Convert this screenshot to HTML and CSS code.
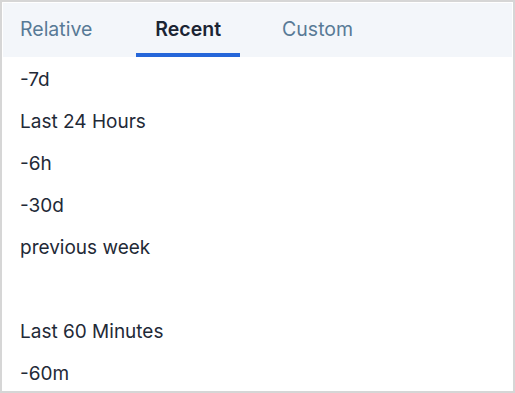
FILE: index.html
```html
<!DOCTYPE html>
<html lang="en">

<head>
    <meta charset="UTF-8">
    <title>Time range</title>
    <link rel="stylesheet" href="styles.css">
</head>

<body>

    <div class="panel">
        <div class="tabs">
            <div class="tab">Relative</div>
            <div class="tab active">Recent</div>
            <div class="tab">Custom</div>
        </div>

        <ul class="recent-list">
            <li>-7d</li>
            <li>Last 24 Hours</li>
            <li>-6h</li>
            <li>-30d</li>
            <li>previous week</li>
            <li></li>
            <li>Last 60 Minutes</li>
            <li>-60m</li>
        </ul>
    </div>

</body>

</html>
```

FILE: styles.css
```css
html,
body {
    margin: 0;
    height: 100%;
}

body {
    background: #d6d6d6;
    font-family: Inter, "Liberation Sans", sans-serif;
    padding: 2px;
    box-sizing: border-box;
}

.panel {
    height: 100%;
    background: white;
    border: 1px solid #ffffff;
    box-sizing: border-box;
    overflow: hidden;
}

.tabs {
    display: flex;
    gap: 25px;
    height: 54px;
    background: #f3f6fa;
}

.tab {
    padding: 0 17px;
    font-size: 19.5px;
    line-height: 52px;
    height: 50px;
    color: #587a96;
    border-bottom: 4px solid transparent;
}

.tab:first-child {
    padding-right: 19px;
}

.tab.active {
    padding: 0 19px;
    color: #1b2433;
    font-weight: 600;
    border-bottom-color: #2566d9;
}

.recent-list {
    list-style: none;
    margin: 0;
    padding: 1px 0 0;
}

.recent-list li {
    height: 42px;
    line-height: 44px;
    padding-left: 17px;
    font-size: 19px;
    color: #1f2a37;
}
```
